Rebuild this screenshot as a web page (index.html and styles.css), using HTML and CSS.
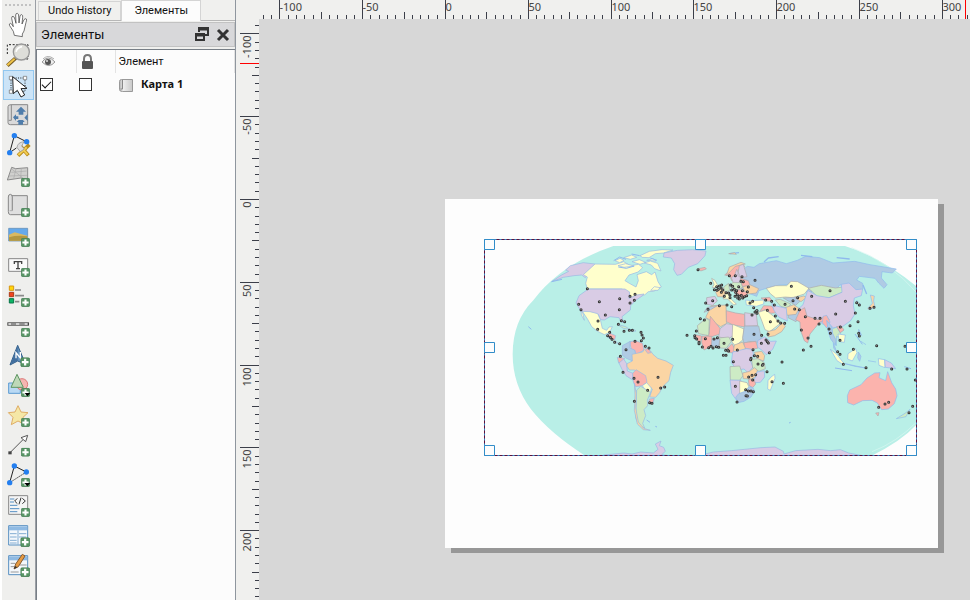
FILE: index.html
```html
<!DOCTYPE html>
<html lang="ru">
<head>
<meta charset="utf-8">
<title>Макет</title>
<link rel="stylesheet" href="styles.css">
</head>
<body>
<svg class="defs" aria-hidden="true">
  <symbol id="plus" viewBox="0 0 26 26"><rect x="1" y="1" width="24" height="24" rx="4" fill="#589565" stroke="#3f7a50" stroke-width="2"/><path d="M13 4v18M4 13h18" stroke="#fff" stroke-width="6"/></symbol>
  <linearGradient id="sheet"><stop stop-color="#b5b5b5"/><stop offset=".3" stop-color="#ededed"/><stop offset="1" stop-color="#c9c9c9"/></linearGradient>
</svg>
<nav class="toolbar" aria-label="Инструменты">
  <button aria-label="Панорама"><svg viewBox="9 30 93 90"><path d="M43 106l-3-12-11-17q-3-6 2-7 4 0 9 10l-5-25q0-7 4-6 4 0 6 10l3 11-1-25q1-6 5-5 4 1 4 8l1 21 3-21q2-5 5-4 4 1 3 8l-2 20 6-13q4-5 7-2 2 2-1 10l-6 26-5 9v8z" fill="#fff" stroke="#333" stroke-width="2"/></svg></button>
  <button aria-label="Масштаб"><svg viewBox="9 120 93 90"><path d="M22 162v-28h62v43H44" fill="none" stroke="#222" stroke-width="3" stroke-dasharray="6 5"/><path d="M22 197l24-22" stroke="#765b22" stroke-width="11"/><path d="M22 196l22-20" stroke="#f0c449" stroke-width="6"/><circle cx="64" cy="156" r="24" fill="#deded9" stroke="#999" stroke-width="4"/><path d="M48 155q4-13 18-15" stroke="#fff" stroke-width="5" fill="none"/></svg></button>
  <button class="active" aria-label="Выделить"><svg viewBox="9 210 93 90"><path d="M33 234h42v40H33z" fill="none" stroke="#222" stroke-width="3" stroke-dasharray="3 4"/><path d="M28 229h10v10H28zM70 229h10v10H70zM28 270h10v10H28z" fill="#fff" stroke="#666" stroke-width="2"/><path d="M38 230l2 51 12-10 11 20 11-6-11-19 18-1z" fill="#fff" stroke="#222" stroke-width="3"/></svg></button>
  <button aria-label="Сдвинуть содержимое"><svg viewBox="9 300 93 90"><path d="M33 314h50v60H31q-7 0-7-6v-48q0-6 9-6z" fill="#dadada" stroke="#898989" stroke-width="3"/><path d="M34 315v46h-8" fill="none" stroke="#888" stroke-width="3"/><path d="M63 320l15 15h-8v9H56v-9h-8zM55 374v-8h-5l6-6h13l5 6h-5v8zM39 352l9-9v6h7v8h-7v6zM83 342v21l-10-10z" fill="#4f7dab"/></svg></button>
  <button aria-label="Править узлы"><svg viewBox="9 390 93 90"><path d="M43 407L29 458M43 407l36 18M29 458l20-14" stroke="#222" stroke-width="3"/><path d="M54 467l34-33M58 434l27 32" stroke="#b98c1d" stroke-width="11"/><path d="M55 465l25-23M62 440l21 24" stroke="#f3cd52" stroke-width="6"/><path d="M51 443q1-16 21-18l-7 13 8 9-12 8z" fill="#ddd" stroke="#888" stroke-width="2"/><path d="M43 407h.1M29 458h.1M80 425h.1" stroke="#247fef" stroke-width="16" stroke-linecap="round"/></svg></button>
  <button aria-label="Добавить 3D карту"><svg viewBox="9 15 93 90"><path d="M35 37l12 4 36-3v37l-20-6-41 6z" fill="#d0d0ce" stroke="#8b8b8b" stroke-width="3"/><path d="M34 52l46-4M27 63l54-2M48 41l-7 30M64 40l-2 29M35 42l35 28" fill="none" stroke="#aaa" stroke-width="2"/><use href="#plus" x="63" y="69" width="27" height="27"/></svg></button>
  <button aria-label="Добавить карту"><svg viewBox="9 105 93 90"><path d="M35 122h47v57H31q-6 0-6-9v-44q0-8 6-8 6 0 6 8v40" fill="#dfdfdf" stroke="#878787" stroke-width="3"/><path d="M37 127v40h-8" fill="none" stroke="#999" stroke-width="2"/><use href="#plus" x="63" y="159" width="27" height="27"/></svg></button>
  <button aria-label="Добавить изображение"><svg viewBox="9 195 93 90"><path d="M26 220h57v38H26z" fill="#65a9ea" stroke="#5683ad" stroke-width="2"/><path d="M27 239l17-7 38 10v15H27z" fill="#d9b960"/><path d="M27 247q25-7 55-3v13H27z" fill="#b29741"/><use href="#plus" x="63" y="249" width="27" height="27"/></svg></button>
  <button aria-label="Добавить текст"><svg viewBox="9 285 93 90"><path d="M26 311h57v38H26z" fill="#fafafa" stroke="#888" stroke-width="3"/><path d="M43 327v-7h22v7M54 320v21M48 341h12" fill="none" stroke="#444" stroke-width="4"/><use href="#plus" x="63" y="339" width="27" height="27"/></svg></button>
  <button aria-label="Добавить легенду"><svg viewBox="9 375 93 90"><path d="M28 393h13v13H28z" fill="#ffd60a" stroke="#d79712" stroke-width="3"/><path d="M28 412h13v13H28z" fill="#ef4520" stroke="#aa3a17" stroke-width="3"/><path d="M28 431h13v13H28z" fill="#0bb464" stroke="#087446" stroke-width="3"/><path d="M45 405h18M45 422h27M45 440h13" stroke="#8b8b8b" stroke-width="5"/><use href="#plus" x="63" y="429" width="27" height="27"/></svg></button>
  <button aria-label="Добавить масштабную линейку"><svg viewBox="9 30 93 90"><path d="M22 67h65v10H22z" fill="#444"/><path d="M25 72h9M47 72h12M73 72h10" stroke="#fff" stroke-width="4"/><path d="M34 72h13M60 72h13" stroke="#a8a8a8" stroke-width="4"/><use href="#plus" x="63" y="84" width="27" height="27"/></svg></button>
  <button aria-label="Добавить стрелку севера"><svg viewBox="9 120 93 90"><path d="M53 136l24 57-24-10-23 12z" fill="#6593bf" stroke="#345f89" stroke-width="3"/><path d="M53 139v43l-21 10z" fill="#426f9f"/><path d="M48 175v-17l13 16v-18" stroke="#fff" stroke-width="4" fill="none"/><use href="#plus" x="61" y="172" width="29" height="29"/></svg></button>
  <button aria-label="Добавить фигуру"><svg viewBox="9 210 93 90"><path d="M26 249h35v31H26z" fill="#b9d9f4" stroke="#5c9bd1" stroke-width="3"/><circle cx="66" cy="253" r="17" fill="#f5b5b0" stroke="#dd7777" stroke-width="3"/><path d="M51 223l19 39H33z" fill="#bed8b8" stroke="#5f9663" stroke-width="3"/><use href="#plus" x="63" y="264" width="27" height="27"/><path d="M74 279h17l-9 10z"/></svg></button>
  <button aria-label="Добавить маркер"><svg viewBox="9 300 93 90"><path d="M54 317l9 19 21 2-15 14 6 22-21-11-20 11 5-22-14-14 20-2z" fill="#f5e7a6" stroke="#dfad65" stroke-width="3"/><use href="#plus" x="63" y="354" width="27" height="27"/></svg></button>
  <button aria-label="Добавить стрелку"><svg viewBox="9 390 93 90"><path d="M31 457l39-39" stroke="#555" stroke-width="3"/><path d="M83 406l-20 7 14 12z" fill="#fff" stroke="#555" stroke-width="3"/><path d="M25 454h10v9H25z" fill="#444"/><use href="#plus" x="63" y="443" width="27" height="27"/></svg></button>
  <button aria-label="Добавить узловой объект"><svg viewBox="9 30 93 90"><path d="M29 98L43 48l36 18" fill="none" stroke="#222" stroke-width="3"/><path d="M79 66L29 98" stroke="#222" stroke-width="3" stroke-dasharray="4 3"/><path d="M43 48h.1M79 66h.1M29 98h.1" stroke="#247fef" stroke-width="16" stroke-linecap="round"/><use href="#plus" x="63" y="84" width="27" height="27"/><path d="M73 99h18l-9 10z"/></svg></button>
  <button aria-label="Добавить HTML"><svg viewBox="9 120 93 90"><path d="M26 137h57v56H26z" fill="#f5f5f5" stroke="#888" stroke-width="3"/><path d="M30 147h13M30 156h12M30 166h22M30 176h28M30 185h22" stroke="#548fc3" stroke-width="3"/><path d="M52 145l-8 8 8 8M57 163l6-20M67 145l9 8-9 8" stroke="#333" stroke-width="3" fill="none"/><use href="#plus" x="63" y="174" width="27" height="27"/></svg></button>
  <button aria-label="Добавить таблицу атрибутов"><svg viewBox="9 210 93 90"><path d="M26 227h57v58H26z" fill="#f4f8fc" stroke="#578fc1" stroke-width="3"/><path d="M27 229h55v12H27z" fill="#8fbae3"/><path d="M54 241v43M30 251h20M57 251h22M30 261h20M57 261h22M30 271h20M30 279h20" stroke="#82acd2" stroke-width="3"/><use href="#plus" x="61" y="262" width="29" height="29"/></svg></button>
  <button aria-label="Добавить таблицу"><svg viewBox="9 300 93 90"><path d="M26 317h57v57H26z" fill="#f4f8fc" stroke="#578fc1" stroke-width="3"/><path d="M27 319h55v12H27z" fill="#8fbae3"/><path d="M32 340h14M32 350h10M60 345h20M32 366h24" stroke="#999" stroke-width="3"/><path d="M42 357l5-15 20-29 8 5-20 32z" fill="#e79b43" stroke="#855b32" stroke-width="3"/><path d="M42 357l3-9 7 4z" fill="#333"/><use href="#plus" x="61" y="352" width="29" height="29"/></svg></button>
</nav>

<aside class="dock">
  <div class="tabs" role="tablist">
    <button class="tab" role="tab" aria-selected="false">Undo History</button>
    <button class="tab" role="tab" aria-selected="true">Элементы</button>
  </div>
  <header class="dock-title">
    <h1>Элементы</h1>
    <button aria-label="Открепить"><svg width="14" height="15" viewBox="0 0 14 15"><path d="M4 5V1h9v7H9M1 7h8v6H1z" fill="none" stroke="#333" stroke-width="2"/><path d="M4 2h9M1 8h8" stroke="#333" stroke-width="3"/></svg></button>
    <button aria-label="Закрыть"><svg width="14" height="14" viewBox="0 0 14 14"><path d="M2 2l10 10M12 2L2 12" stroke="#333" stroke-width="3"/></svg></button>
  </header>
  <div class="items">
    <table>
      <thead><tr>
        <th aria-label="Видимость"><svg width="15" height="12" viewBox="0 0 15 12"><path d="M1 6q6-8 13 0-6 7-13 0z" fill="#eee" stroke="#999"/><circle cx="7" cy="6" r="3" fill="#555"/><circle cx="6" cy="5" r="1" fill="#ddd"/><path d="M2 3q5-5 11 0" stroke="#aaa" fill="none"/></svg></th>
        <th aria-label="Блокировка"><svg width="13" height="16" viewBox="0 0 13 16"><path d="M3 8V5q0-4 3.500-4T10 5v3" fill="none" stroke="#777" stroke-width="2"/><rect x="1" y="7" width="11" height="8" rx="1" fill="#555"/></svg></th>
        <th>Элемент</th>
      </tr></thead>
      <tbody><tr>
        <td><input type="checkbox" checked aria-label="Карта 1: видимость"></td>
        <td><input type="checkbox" aria-label="Карта 1: блокировка"></td>
        <td><span class="item"><svg width="14" height="13" viewBox="0 0 14 13"><path d="M2.500.500h11v12h-10q-3 0-3-2v-8q0-2 2-2z" fill="url(#sheet)" stroke="#999"/><path d="M3.500 1v9h-2" fill="none" stroke="#888"/></svg>Карта 1</span></td>
      </tr></tbody>
    </table>
  </div>
</aside>

<main class="workspace">
  <svg class="ruler top" id="ruler-x" aria-label="Горизонтальная линейка"></svg>
  <svg class="ruler side" id="ruler-y" aria-label="Вертикальная линейка"></svg>
  <div class="canvas">
    <div class="paper">
      <svg class="map" viewBox="12 12 1299 651" role="img" aria-label="Карта мира">
        <defs><g id="cities" fill="none" stroke-linecap="round">
          <path d="M322 161h.1M296 208h.1M303 224h.1M358 200h.1M419 191h.1M450 184h.1M465 178h.1M463 196h.1M450 204h.1M418 224h.1M376 240h.1M354 258h.1M353 283h.1M424 257h.1M434 260h.1M415 268h.1M389 292h.1M383 302h.1M391 307h.1M396 313h.1M404 322h.1M419 326h.1M432 289h.1M448 286h.1M457 286h.1M483 292h.1M486 300h.1M490 309h.1M484 317h.1M465 319h.1M496 334h.1M507 339h.1M438 344h.1M421 364h.1M429 412h.1M462 430h.1M474 441h.1M534 427h.1M554 456h.1M542 459h.1M503 466h.1M463 499h.1M509 503h.1M516 505h.1M621 301h.1M654 104h.1M692 145h.1M677 204h.1M698 197h.1M684 223h.1M661 251h.1M673 255h.1M649 288h.1M644 302h.1M650 312h.1M657 326h.1M667 336h.1M676 311h.1M686 338h.1M699 339h.1M709 335h.1M716 337h.1M702 312h.1M732 325h.1M743 345h.1M730 361h.1M760 380h.1M772 345h.1M758 313h.1M718 212h.1M741 210h.1M755 215h.1M718 153h.1M725 150h.1M715 163h.1M728 165h.1M733 184h.1M750 188h.1M752 150h.1M755 165h.1M765 184h.1M748 122h.1M766 122h.1M786 125h.1M825 136h.1M790 140h.1M805 156h.1M802 170h.1M772 179h.1M778 192h.1M767 172h.1M818 199h.1M857 195h.1M821 218h.1M830 227h.1M816 240h.1M862 226h.1M886 243h.1M871 260h.1M894 258h.1M902 264h.1M914 265h.1M864 298h.1M845 301h.1M822 298h.1M844 325h.1M868 353h.1M819 344h.1M812 374h.1M834 387h.1M816 421h.1M818 435h.1M805 468h.1M813 468h.1M798 482h.1M771 501h.1M766 454h.1M876 440h.1M906 381h.1M910 445h.1M861 410h.1M976 245h.1M984 309h.1M993 334h.1M970 345h.1M964 285h.1M1005 250h.1M1020 250h.1M1017 267h.1M1051 295h.1M1047 282h.1M1081 276h.1M1080 316h.1M1067 237h.1M1050 167h.1M934 154h.1M995 184h.1M953 188h.1M944 222h.1M1096 199h.1M1130 203h.1M1138 210h.1M1182 217h.1M1170 220h.1M1126 234h.1M1134 260h.1M1136 295h.1M1138 303h.1M1110 272h.1M1190 332h.1M1073 350h.1M1080 358h.1M1090 388h.1M1120 343h.1M1158 398h.1M1235 402h.1M1281 402h.1M1275 334h.1M1196 517h.1M1215 507h.1M1226 502h.1M1287 533h.1M1298 514h.1M1306 435h.1"/>
          <path d="M703 164h.1M711 166h.1M723 159h.1M738 173h.1M746 174h.1M758 154h.1M763 163h.1M770 167h.1M776 155h.1M783 139h.1M787 167h.1M793 185h.1M788 189h.1M784 181h.1M773 189h.1M750 180h.1M778 184h.1M800 182h.1M810 204h.1M825 231h.1M831 235h.1M875 199h.1M883 210h.1M939 197h.1M915 208h.1M958 224h.1M724 172h.1M710 155h.1M833 364h.1M849 388h.1M858 315h.1M813 370h.1M823 362h.1M847 391h.1M797 464h.1M820 470h.1M802 483h.1M827 419h.1M806 426h.1M645 308h.1M657 322h.1M693 334h.1M712 308h.1M737 346h.1M746 348h.1M738 361h.1M862 320h.1M865 324h.1M831 227h.1"/>
        </g></defs>
        <path d="M400 33H1095Q1200 65 1311 155V568Q1260 622 1175 662H315Q210 595 153 523Q98 450 98 358Q98 258 160 196Q240 88 400 33z" fill="#b9efe7"/>
        <path d="M1115 38Q1230 80 1311 174M1176 650Q1250 622 1311 560" fill="none" stroke="#d9f7f1" stroke-width="2"/>
        <g stroke="#99b8e4" stroke-width="2" stroke-linejoin="round">
          <path fill="#d9cce5" d="M345 87l-35-4-39 9-14 13 9 4-23 12-28 19 35-13 32-5 23-2 11 8z"/>
          <path fill="#ffffcc" d="M345 87l62 1 24-8 20 12 25-4 12 10-14 13-27 9-12 17 13 8 20 11 7-19-4-18 28-9 16 9 10-8 9 29 10 16-23 13-16 1-10 9-28 12-12 4-9-17-20-16H322l-5-17 5-19-12-7z"/>
          <path fill="#ffffcc" d="M405 77l15-7 12 6-13 7zM431 68l24-8 15 7-19 6zM456 80l22-6 19 8-17 6zM480 62l28-13 38-5 33 1-29 9-24 2-19 12-20-1zM493 84l18-6 22 7 10 23-19-7-10-11zM500 76l19-5 9 7zM414 92l23-6 25 7-30 4zM512 166l22 0 6-8-17-3z"/>
          <path fill="#d9cce5" d="M552 54l40-8 46-2 40 4-3 14-9 10-13 14-28 11-21 21-13 3-10-17 3-18-10-17-24-3zM325 162h110l14 9-2 19 22-10 23-3-10 9-16 11-14 15-1 13-25 20 4 18-8-4-5-11-27-3-17 10-12-1-5-15-23-6-29-1-7-13-9-15 9-22z"/>
          <path fill="#ffffcc" d="M304 229l26 1 23 6 8 18 6 26 13 6 7-10 10-1-8 17-16 7-22-11-16-13-12-22-12-18-4-6 6 27-9-16z"/>
          <path fill="#fbb3ad" d="M379 302l12-7 16 7-3 13-9-1zM449 320l18-3 21 8 4 20-14 8 4 7-14 2-3-15-11-4z"/>
          <path fill="#cdebc5" d="M412 268l25 7 12 8-19-3zM451 284l12 0 5 4-14 1zM384 307l20 8 13 12-13-5z"/>
          <path fill="#b0cbe4" d="M427 332l24-13-2 20 15 6 3 15-7 19-21-9-12-9z"/>
          <path fill="#fbb3ad" d="M412 367l22 3-7 10-11 4z"/>
          <path fill="#d9cce5" d="M417 384l14-12 9 14 2 22 17 7-1 20-20-13-12-19z"/>
          <path fill="#fbd5a4" d="M441 386l16-8-1-20 32-7 7-11 17 8 7 10 14 12 25 8 22 13-8 21-5 25-20 19-8 17-12 14-18-1 8-24-19-17-9-25-26-15-15 0-7-11z"/>
          <path fill="#fbb3ad" d="M458 415l10-11 29 18 4 20-13 10-21 3-7-14zM508 492l15-2-4 13-13 1zM496 345l8-6 9 14-10 2z"/>
          <path fill="#ffffcc" d="M487 452l13-9 14 16-3 16-12-6z"/>
          <path fill="#cdebc5" d="M470 465l12-11 30 18-10 23 1 17-11 12 5 18-9 23 6 14-18-9-9-22 2-50z"/>
          <path fill="#fbd5a4" d="M463 445l6 31-2 42 8 43 16 19 20 6-21-2-18-17-9-41 2-46z"/>
          <path fill="#d9cce5" d="M370 660l62-6 24 3 26-6 38 3 14-11-8-16 17-9-5 14 13 5 5 12-11 10 20 3h90l45-11 54-4 40-4 49-5 42-2 25 13 2 8 35-10 67-4 38 4 29-3 25 10 56 11v12H370z"/>
        </g>
        <g transform="translate(630)" stroke="#aaa9ae" stroke-width="2" stroke-linejoin="round">
          <path fill="#b0cbe4" stroke="#8fb9ed" d="M172 94l20 3 16-11 51-9 30 9 33-10 25-12 42 4 40 16 65-5 46 10 79 13-12 12-31-4-2 19 17 20-9 11-16-16-11-14-47-6-8 11 18 10 1 15-16 18-27-11-26-18-13 16-43-2-40 9-27-11-31-13-29 2-35 9-25 8-7 17-26-10-22-13 4-22-8-27z"/>
          <path fill="none" stroke="#8fb9ed" stroke-width="4" d="M222 81l13-12 31-4M333 61l34 4M440 68l39 4M120 56l27-3M519 150l11 27"/>
          <path fill="#fbb3ad" d="M104 120l35-31 18-4 7 10-18 8-20 35-7-15zM25 101l20-4 4 5-17 6z"/>
          <path fill="#fbd5a4" d="M118 96l35-14 13 5-30 7-27 28zM116 56l18-3 5 5zM77 172l19-14 16 12-7 16-22-1z"/>
          <path fill="#d9cce5" d="M148 92l12-4 11 37-19 3-9-7zM124 128l10-7 6-18 13 26-9 20-11 4zM50 188l25-4 7 14-15 13-17-3z"/>
          <path fill="#ffffcc" d="M65 130l10 6 11 20-19 2 5-10zM99 181l14-7 6 14 20 19-8 3-18-18-13 0z"/>
          <path fill="#cdebc5" d="M118 154l11-12 25 1 4 14-20 8zM136 166l22-5 8 12-18 8zM101 156l15-11 3 22-15 3z"/>
          <path fill="#fbb3ad" d="M151 130l24 7 6 16-24 1zM130 168l16-4 29 9-14 17-20-6z"/>
          <path fill="#fbd5a4" d="M158 155l24-5 24 11-7 13-24 3-10-7z"/>
          <path fill="#ffffcc" stroke="#8fb9ed" d="M167 195l17 2 38-2-1 12-22 7-30-4z"/>
          <path fill="#ffffcc" d="M229 160l28-8h33l13-13 20 1 34 20-14 17-34 11-23-2-29 3-16-13z"/>
          <path fill="#cdebc5" d="M354 160l40-9 42 8 23-3-1 15-41 18-36-4-15-16zM256 195l15-2 31 14-8 13-22-6z"/>
          <path fill="#b0cbe4" d="M280 189l44-3 12 7-19 18zM297 236l30-12 5 14-14 22-24-12z"/>
          <path fill="#fbd5a4" d="M316 189l25-6 9 4-17 13zM286 218l25-9 16 11-9 18-27 3z"/>
          <path fill="#fbb3ad" d="M221 212l24 1 15 20-17 2-17-11-17 6zM213 189l26-2 8 12-20-1z"/>
          <path fill="#d9cce5" stroke="#8fb9ed" d="M245 205l14 8 30 7 3 38-26-12-14-20zM353 166l28 16 36 6 39-16-2-24 23-4 21 20 20-2-4 20-21 7-3 22 5 26-14 21-24 17-27 3-19-10-13-1-11-9-28 3-31-17-3-22 14-13z"/>
          <path fill="#ffffcc" d="M205 232l22-7 24 19 19 22-31 24-14-6-9-25z"/>
          <path fill="#fbd5a4" d="M232 290l24-6 14-14 8-6 8 10-11 16-21 12-20 4zM64 212l44-2 2 55-18 10-45-28z"/>
          <path fill="#fbb3ad" d="M317 254l13-28 14-8 7 25 33 11 26-11 8 12-28 6-16 19-14 17-7 27-10-7-12-33-1-23zM109 227l28 7 27 4v38l-37-7-18-9zM61 244l29 36 8 15-30 9-14 12-17-6 20-12z"/>
          <path fill="#d9cce5" d="M164 233l35 5 4 34-38 2zM90 281l20-15 18 3 4 32-17 10-29-5z"/>
          <path fill="#cdebc5" d="M22 272l26-22 10 6-2 46-30-6zM86 309l30-3 8 14-16 20-18-1z"/>
          <path fill="#ffffcc" d="M128 268l34 14-4 33-22 18-10-12z"/>
          <path fill="#b0cbe4" d="M163 273l43 0 8 35-9 14-29-3-14 9-4-20zM42 232l10-15 30-5-20 12zM55 321l14-10 21 1-4 23-24-2z"/>
          <path fill="#fbb3ad" d="M15 299l20 4-3 17-9-2zM36 303l30 1-2 30-22 11-7-22zM162 323l35-4 7 20-20 5-22-5zM112 340l14-14 11 21-8 7-18-3z"/>
          <path fill="#fbd5a4" d="M133 330l25-9 9 20-23 10-14-2z"/>
          <path fill="#d9cce5" stroke="#8fb9ed" d="M203 317l21-12 18 14 17-1-11 25-19 16-14-14-12-8zM128 351l41-10 19 2 2 15-9 19 8 19-15 17-12-11-21 3-17-22z"/>
          <path fill="#fbd5a4" d="M193 352l22-3 9 13-3 16-21-8z"/>
          <path fill="#cdebc5" d="M185 373l19-2 19 12 3 18-19 8-19-10zM120 395l29-2 10 29-10 14h-28z"/>
          <path fill="#fbd5a4" d="M158 414l21-5 14-11 9 7-3 18-14 9-25-1z"/>
          <path fill="#d9cce5" stroke="#8fb9ed" d="M201 411l22-4 1 19-13 16-16 1-8 14-7-3 16-27zM120 435l33 1-1 52-13 7-14-20z"/>
          <path fill="#ffffcc" d="M149 438l22 5 6 13-12 17-16 4z"/>
          <path fill="#fbb3ad" d="M175 434l16-3 6 16-9 11-11-7z"/>
          <path fill="#b0cbe4" stroke="#8fb9ed" d="M146 476l19-7 11-13 12 1 6 11-11 18-21 13-18 4-7-16z"/>
          <path fill="#ffffcc" stroke="#8fb9ed" d="M234 437l9-11 11-8 1 12-14 36-8-4z"/>
          <path fill="#fbb3ad" stroke="#8fb9ed" d="M399 244l11-3 10 20-10 18-13-16zM473 503l-1-21 7-17 34-16 18-20 23-15 16-1-3 15 20 9 6-27 12 33 12 19 4 20-8 24-18 16-20 2-13-20-16-8-28 1-27 13z"/>
          <path fill="#fbd5a4" stroke="#8fb9ed" d="M541 180l12 3-2 15 4 18-18 8-4-4 14-15z"/>
          <path fill="#cdebc5" stroke="#8fb9ed" d="M426 282l15-6 13 25 11 10-9 7-16-15-1 29-9-21zM619 551l26-16 15-12-12 22zM500 196l11 11-8 2z"/>
          <path fill="#fbb3ad" d="M440 275l13-3 9 13-11 8zM557 534l10-1-3 10z"/>
          <path fill="#ffffcc" stroke="#8fb9ed" d="M444 297l22 3-3 22-15-2zM421 343l19 14 20 26 1 7-20-13zM474 356l23-15 4 12-14 25-14-6zM565 371l19 3 1 24-18-7z"/>
          <path fill="#d9cce5" stroke="#8fb9ed" d="M584 374l20 10 13 17-31-4z"/>
          <path fill="#b0cbe4" stroke="#8fb9ed" d="M410 256l15 18 2 20 10 19-1 18-14-19-7-21zM430 325l12 29-11-15zM506 283l9 18-9-5zM513 319l15 10M465 386l61 13-31-5zM534 377l24 4M505 351l8 13-4 15-6-11z"/>
        </g>
        <g fill="none" stroke="#8fb9ed" stroke-width="3"><path d="M401 77l18-11 19 7M415 96l24 4 24-7M455 57l24 5M511 69l20 7M215 140l31-7M145 275l9 8M500 555l10 7M526 574l5 2M1065 399l51 8M1273 395l20 6M1125 297l22 31M927 564l5-2"/></g>
        <use href="#cities" stroke="#333" stroke-width="9"/>
        <use href="#cities" stroke="#aaa" stroke-width="3"/>
        <path d="M13.500 13.500h1296v648h-1296z" fill="none" stroke="#60103c" stroke-width="3"/>
        <path d="M13.500 13.500h1296v648h-1296z" fill="none" stroke="#328dc9" stroke-width="3" stroke-dasharray="6 9"/>
        <path d="M13.500 13.500h30v30h-30zM646.500 13.500h30v30h-30zM1279.500 13.500h30v30h-30zM13.500 322.500h30v30h-30zM1279.500 322.500h30v30h-30zM13.500 631.500h30v30h-30zM646.500 631.500h30v30h-30zM1279.500 631.500h30v30h-30z" fill="#fdfdfd" stroke="#328dc9" stroke-width="3"/>
      </svg>
    </div>
  </div>
</main>
<script src="rulers.js"></script>
</body>
</html>
```
FILE: styles.css
```css
* { box-sizing: border-box; }

body {
  display: flex;
  height: 100vh;
  margin: 0;
  overflow: hidden;
  background: #f0f0ee;
  color: #111;
  font: 11px/16px Roboto, "Noto Sans", sans-serif;
}

button { padding: 0; border: 0; background: none; color: inherit; font: inherit; }
svg { display: block; }
.defs { position: absolute; width: 0; height: 0; }

.toolbar {
  flex: none;
  width: 36px;
  padding: 10px 1px 0;
  border-left: 2px solid #fff;
  border-right: 1px solid #9b9fa5;
  background: #efefed;
}
.toolbar::before {
  display: block;
  width: 26px;
  height: 2px;
  margin: -6px 0 4px 2px;
  background: repeating-linear-gradient(90deg, #c2c2c2 0 2px, transparent 2px 4px);
  content: "";
}
.toolbar button { display: block; width: 31px; height: 30px; }
.toolbar svg { width: 31px; height: 30px; }
.toolbar .active { background: #cce4f7; box-shadow: inset 0 0 0 1px #92c7ef; }

.dock { display: flex; flex: none; flex-direction: column; width: 200px; border-right: 1px solid #8f969e; }
.tabs { display: flex; align-items: flex-end; height: 21px; padding-left: 2px; border-bottom: 1px solid #b7b7b7; }
.tab { height: 19px; padding: 0 9px; border: 1px solid #d4d4d4; border-bottom: 0; }
.tab[aria-selected="true"] { height: 21px; padding: 0 12px; margin-bottom: -1px; background: #fcfcfc; }

.dock-title {
  display: flex;
  align-items: center;
  gap: 7px;
  height: 25px;
  margin: 1px 0 2px;
  padding: 0 4px;
  border: 1px solid #c2c2c2;
  background: #d8d8da;
}
.dock-title h1 { flex: 1; margin: 0; font-size: 13px; font-weight: 400; }

.items { flex: 1; border-top: 1px solid #777e86; border-left: 1px solid #777e86; background: #fcfcfc; }
table { width: 100%; table-layout: fixed; border-collapse: collapse; }
th, td { height: 22px; padding: 0; font-weight: 400; text-align: left; vertical-align: middle; }
th { height: 23px; border-right: 1px solid #e3e3e3; }
th:nth-child(-n+2) { width: 39px; }
th:nth-child(3) { padding-left: 3px; }
th svg { margin-left: 4px; }
td input {
  display: block;
  width: 13px;
  height: 13px;
  margin: 0 0 0 3px;
  appearance: none;
  border: 1px solid #333;
  background: #fff;
}
td input:checked::before {
  display: block;
  width: 8px;
  height: 4px;
  margin: 2px 1px;
  border-bottom: 1px solid #111;
  border-left: 1px solid #111;
  transform: rotate(-45deg);
  content: "";
}
.item { display: flex; align-items: flex-end; gap: 8px; padding-left: 4px; font: 700 11px/16px "Noto Sans", sans-serif; }

.workspace { display: grid; flex: 1; grid-template: 19px 1fr / 23px 1fr; min-width: 0; }
.ruler { width: 100%; height: 100%; overflow: hidden; font: 11px "Noto Sans", sans-serif; fill: #444; }
.ruler.top { grid-column: 2; }
.ruler.side { grid-column: 1; }
.ruler path { fill: none; stroke: #3c3f49; }
.ruler .cursor { stroke: #f00; }

.canvas { position: relative; overflow: hidden; background: #d7d7d7; }
.paper {
  position: absolute;
  top: 180px;
  left: 186px;
  width: 493px;
  height: 349px;
  background: #fdfdfd;
  box-shadow: 6px 5px #979797;
}
.map { width: 433px; margin: 40px 0 0 39px; }
```
FILE: rulers.js
```js
const NS = "http://www.w3.org/2000/svg";
const STEP = 8.28;

function add(parent, name, attributes, text) {
  const node = document.createElementNS(NS, name);
  for (const key in attributes) node.setAttribute(key, attributes[key]);
  if (text !== undefined) node.textContent = text;
  parent.append(node);
}

function drawRuler(svg, origin, vertical, cursor) {
  const edge = vertical ? 23 : 19;
  const line = (at, size, kind) => add(svg, "path", {
    class: kind,
    d: vertical ? `M${edge - size} ${at}h${size}` : `M${at} ${edge - size}v${size}`
  });
  const length = vertical ? svg.clientHeight : svg.clientWidth;
  for (let i = Math.ceil(-origin / STEP); origin + i * STEP < length; i++) {
    const at = Math.round(origin + i * STEP) + 0.5;
    const major = i % 10 === 0;
    line(at, major ? 19 : i % 5 === 0 ? 7 : 4, "tick");
    if (major) {
      add(svg, "text", vertical
        ? { transform: `translate(15 ${at + 2}) rotate(-90)`, "text-anchor": "end" }
        : { x: at, y: 11 }, i * 5);
    }
  }
  line(cursor, 19, "cursor");
}

drawRuler(document.getElementById("ruler-x"), 186, false, 706.5);
drawRuler(document.getElementById("ruler-y"), 180, true, 44.5);
```
